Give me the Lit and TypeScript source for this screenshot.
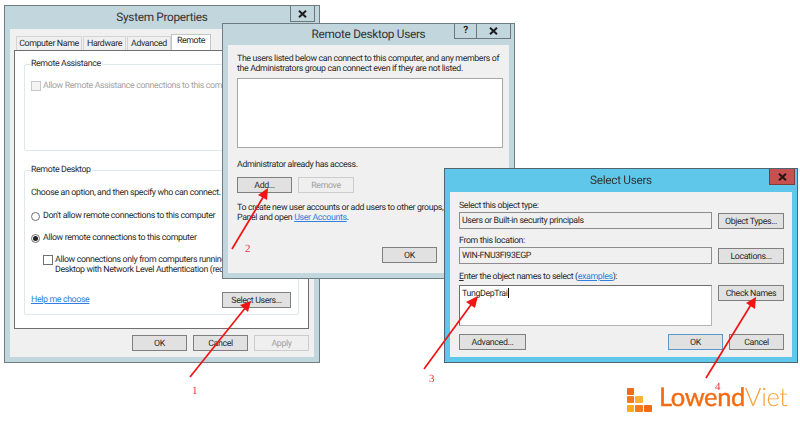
import { LitElement, html, css, svg } from "lit";
import { customElement } from "lit/decorators.js";

const closeIcon = svg`<svg class="x" width="9" height="8" viewBox="0 0 9 8"><path d="M1 0.8 L8 7.2 M8 0.8 L1 7.2" stroke="currentColor" stroke-width="2" fill="none"/></svg>`;

@customElement("app-root")
export class AppRoot extends LitElement {
  static styles = css`
    :host {
      display: block;
      width: 800px;
      height: 423px;
      position: relative;
      overflow: hidden;
      background: #fff;
      font-family: Roboto, "Open Sans", sans-serif;
      font-size: 8.8px;
      letter-spacing: -0.36px;
      line-height: 10px;
      color: #2a2a2a;
      text-rendering: geometricPrecision;
    }
    .canvas { position: absolute; inset: 0; filter: blur(0.4px); }
    .win {
      position: absolute;
      box-sizing: border-box;
      border: 1px solid #6e7c83;
      background: #c2d6de;
      display: flex;
      flex-direction: column;
      overflow: hidden;
    }
    .w1 { left: 4px; top: 5px; width: 316px; height: 358px; }
    .w2 { left: 222px; top: 23px; width: 293px; height: 256px; }
    .w3 { left: 444px; top: 168px; width: 354px; height: 195px; background: #5fc8ea; border-color: #4d6670; }
    .bar {
      height: 23px;
      flex: none;
      display: grid;
      grid-template-columns: 1fr auto 1fr;
      font-size: 11.8px;
      letter-spacing: -0.3px;
      line-height: 22px;
      color: #333;
    }
    .w2 .bar { height: 21px; line-height: 20px; }
    .title { grid-column: 2; white-space: nowrap; }
    .ctl {
      grid-column: 3;
      justify-self: end;
      display: flex;
      height: 16px;
      margin-right: 4px;
    }
    .w2 .ctl { margin-right: 3px; height: 15px; }
    .w3 .ctl { margin-right: 2px; }
    .ctl span {
      box-sizing: border-box;
      display: flex;
      align-items: center;
      justify-content: center;
      border: 1px solid #6b777d;
      border-top: none;
      color: #1c1c1c;
      font-weight: 700;
      font-size: 10px;
    }
    .ctl span + span { border-left: none; }
    .w1 .close { width: 25px; }
    .w2 .help { width: 23px; }
    .w2 .close { width: 34px; }
    .w3 .close { width: 26px; background: #c75050; border-color: #7d3b3b; color: #2a1414; }
    .panel {
      flex: 1;
      margin: 0 5px 5px;
      background: #f0f0f0;
      display: flex;
      flex-direction: column;
      min-height: 0;
    }
    .w1 .panel { padding: 5px 5px 6px 4px; }
    .w2 .panel { padding: 9px 0 0 9px; }
    .w3 .panel { padding: 9px 9px 0; display: grid;
      grid-template-columns: 253px 66px; column-gap: 6px; justify-content: start; align-content: start; }
    .tabs { display: flex; align-items: flex-end; padding-left: 2px; height: 16px; flex: none; gap: 1px; }
    .tab {
      box-sizing: border-box;
      height: 14px;
      line-height: 14px;
      text-align: center;
      white-space: nowrap;
      background: #f0f0f0;
      border: 1px solid #d4d4d4;
      border-bottom: none;
    }
    .tab.on { height: 16px; background: #fff; line-height: 13px; margin-left: -1px; border-color: #c4c4c4; }
    .pane {
      flex: 1;
      box-sizing: border-box;
      background: #fff;
      border: 1px solid #6f6f6f;
      padding: 6px 9px 0;
      display: flex;
      flex-direction: column;
      gap: 12px;
    }
    fieldset {
      margin: 0;
      padding: 0 7px 0 6px;
      min-width: 0;
      box-sizing: border-box;
      border: 1px solid #dfe7eb;
      border-radius: 2px;
      overflow: hidden;
      display: flex;
      flex-direction: column;
    }
    legend { padding: 0 1px 0 0; margin-left: 0; white-space: nowrap; line-height: 14px; }
    .g1 { height: 94px; }
    .g2 { height: 152px; }
    .row { display: flex; align-items: center; gap: 2px; white-space: nowrap; height: 10px; }
    .box {
      box-sizing: border-box;
      width: 10px; height: 10px;
      flex: none;
      background: #fff;
      border: 1px solid #707070;
    }
    .box.dis { border-color: #c8c8c8; background: #f4f4f4; }
    .radio {
      box-sizing: border-box;
      width: 9px; height: 9px;
      flex: none;
      margin-right: 1px;
      border-radius: 50%;
      border: 1px solid #707070;
      background: #fff;
      display: flex; align-items: center; justify-content: center;
    }
    .radio i { width: 5px; height: 5px; border-radius: 50%; background: #222; }
    .muted { color: #a2a2a2; }
    .g1 .row { margin-top: 10px; }
    .nw { white-space: nowrap; }
    .choose { margin-top: 11px; }
    .o1 { margin-top: 13px; }
    .o2 { margin-top: 12px; }
    .o3 { margin-top: 12px; margin-left: 12px; align-items: flex-start; height: 20px; }
    .g2foot { display: flex; align-items: center; justify-content: space-between; margin-top: 17px; }
    a { color: #2f80e0; text-decoration: underline; }
    .btn {
      box-sizing: border-box;
      height: 16px;
      padding-top: 1px;
      background: #e1e1e1;
      border: 1px solid #7f7f7f;
      display: flex; align-items: center; justify-content: center;
      white-space: nowrap;
      flex: none;
    }
    .btn.off { background: #efefef; border-color: #cdcdcd; color: #a0a0a0; }
    .btn.def { border-color: #5b97c9; }
    .b55 { width: 55px; }
    .b56 { width: 56px; }
    .b69 { width: 69px; }
    .b67 { width: 67px; }
    .foot { display: flex; justify-content: flex-end; gap: 6px; margin-top: 6px; }
    .list {
      box-sizing: border-box;
      width: 266px; height: 70px;
      margin-top: 4px;
      flex: none;
      background: #fff;
      border: 1px solid #a8a8a8;
    }
    .adm { margin-top: 12px; }
    .addrow { display: flex; gap: 6px; margin-top: 7px; }
    .info { margin-top: 10px; white-space: nowrap; }
    .okrow { display: flex; margin-top: 24px; padding-left: 145px; }
    .field {
      box-sizing: border-box;
      height: 17px;
      padding: 0 2px;
      line-height: 16px;
      background: #f0f0f0;
      border: 1px solid #8d8d8d;
      white-space: nowrap;
      margin-top: 1px;
    }
    .lbl { grid-column: 1 / -1; white-space: nowrap; }
    .lbl.next { margin-top: 7px; }
    .lbl.last { margin-top: 8px; }
    .side { margin-top: 2px; width: 66px; }
    .side.third { margin-top: 3px; }
    .area {
      box-sizing: border-box;
      height: 41px;
      margin-top: 3px;
      padding: 2px 2px;
      background: #fff;
      border: 1px solid #b4b4b4;
      border-top-color: #6e6e6e;
      border-left-color: #6e6e6e;
      white-space: nowrap;
    }
    .caret { display: inline-block; width: 1px; height: 10px; background: #111; vertical-align: -2px; }
    .w3foot {
      grid-column: 1 / -1;
      display: flex;
      gap: 6px;
      margin-top: 8px;
    }
    .w3foot .grow { flex: 1; }
    .u { text-decoration: underline; }
    .arrows { position: absolute; inset: 0; pointer-events: none; }
    .arrows text { font-family: "Liberation Serif", serif; font-size: 11px; letter-spacing: 0; fill: #ee3333; }
    .logo {
      position: absolute;
      left: 627px; top: 383px;
      display: flex;
      align-items: flex-end;
      gap: 6px;
      white-space: nowrap;
    }
    .word { font-family: Lato, sans-serif; font-size: 25.5px; line-height: 29px; color: #f26b12; font-weight: 400; letter-spacing: -0.4px; -webkit-text-stroke: 0.4px #f26b12; }
    .word span { color: #f9a13a; font-weight: 300; -webkit-text-stroke: 0; }
  `;

  render() {
    return html`
      <div class="canvas">
        <section class="win w1">
          <div class="bar"><div class="title">System Properties</div>
            <div class="ctl"><span class="close">${closeIcon}</span></div></div>
          <div class="panel">
            <div class="tabs">
              <div class="tab" style="width:66px">Computer Name</div>
              <div class="tab" style="width:43px">Hardware</div>
              <div class="tab" style="width:44px">Advanced</div>
              <div class="tab on" style="width:40px">Remote</div>
            </div>
            <div class="pane">
              <fieldset class="g1">
                <legend>Remote Assistance</legend>
                <div class="row muted"><span class="box dis"></span>Allow Remote Assistance connections to this computer</div>
              </fieldset>
              <fieldset class="g2">
                <legend>Remote Desktop</legend>
                <div class="nw choose">Choose an option, and then specify who can connect.</div>
                <div class="row o1"><span class="radio"></span>Don't allow remote connections to this computer</div>
                <div class="row o2"><span class="radio"><i></i></span>Allow remote connections to this computer</div>
                <div class="row o3"><span class="box"></span><div>Allow connections only from computers running Remote<br />Desktop with Network Level Authentication (recommended)</div></div>
                <div class="g2foot"><a>Help me choose</a><div class="btn b69">Select Users...</div></div>
              </fieldset>
            </div>
            <div class="foot">
              <div class="btn b55">OK</div><div class="btn b55">Cancel</div><div class="btn b55 off">Apply</div>
            </div>
          </div>
        </section>

        <section class="win w2">
          <div class="bar"><div class="title">Remote Desktop Users</div>
            <div class="ctl"><span class="help">?</span><span class="close">${closeIcon}</span></div></div>
          <div class="panel">
            <div class="nw">The users listed below can connect to this computer, and any members of<br />the Administrators group can connect even if they are not listed.</div>
            <div class="list"></div>
            <div class="adm">Administrator already has access.</div>
            <div class="addrow"><div class="btn b55">Add...</div><div class="btn b56 off">Remove</div></div>
            <div class="info">To create new user accounts or add users to other groups, use User Accounts in Control<br />Panel and open <a>User Accounts</a>.</div>
            <div class="okrow"><div class="btn b55">OK</div></div>
          </div>
        </section>

        <section class="win w3">
          <div class="bar"><div class="title">Select Users</div>
            <div class="ctl"><span class="close">${closeIcon}</span></div></div>
          <div class="panel">
            <div class="lbl">Select this object type:</div>
            <div class="field">Users or Built-in security principals</div>
            <div class="btn side">Object Types...</div>
            <div class="lbl next">From this location:</div>
            <div class="field">WIN-FNU3FI93EGP</div>
            <div class="btn side">Locations...</div>
            <div class="lbl last"><span class="u">E</span>nter the object names to select (<a>examples</a>):</div>
            <div class="area">TungDepTrai<span class="caret"></span></div>
            <div class="btn side third">Check Names</div>
            <div class="w3foot">
              <div class="btn b67">Advanced...</div>
              <div class="grow"></div>
              <div class="btn b55 def">OK</div>
              <div class="btn b55">Cancel</div>
            </div>
          </div>
        </section>

        <svg class="arrows" width="800" height="423" viewBox="0 0 800 423">
          <g stroke="#f01414" stroke-width="1.7" fill="#f01414">
            <line x1="190" y1="377" x2="246" y2="307" />
            <line x1="232" y1="249" x2="265" y2="194" />
            <line x1="424" y1="369" x2="473" y2="302" />
            <line x1="706" y1="378" x2="752" y2="303" />
          </g>
          <g fill="#f01414">
            <path d="M251 301 L248 312 L240 305 Z" />
            <path d="M268 188 L267 200 L258 195 Z" />
            <path d="M478 296 L475 308 L466 302 Z" />
            <path d="M756 297 L755 309 L746 303 Z" />
          </g>
          <text x="192" y="394">1</text>
          <text x="245" y="252">2</text>
          <text x="429" y="382">3</text>
          <text x="715" y="390">4</text>
        </svg>

        <div class="logo">
          <svg width="26" height="26" viewBox="0 0 26 26">
            <rect x="0" y="2" width="7" height="7" rx="1" fill="#f26b12" />
            <rect x="0" y="10" width="7" height="7" rx="1" fill="#f47a1a" />
            <rect x="0" y="19" width="7" height="7" rx="1" fill="#fbab1c" />
            <rect x="8" y="10" width="8" height="7" rx="1" fill="#fbb13a" />
            <rect x="8" y="19" width="8" height="7" rx="1" fill="#f47a1a" />
            <rect x="17" y="19" width="8" height="7" rx="1" fill="#f26b12" />
          </svg>
          <div class="word">Lowend<span>Viet</span></div>
        </div>
      </div>
    `;
  }
}
